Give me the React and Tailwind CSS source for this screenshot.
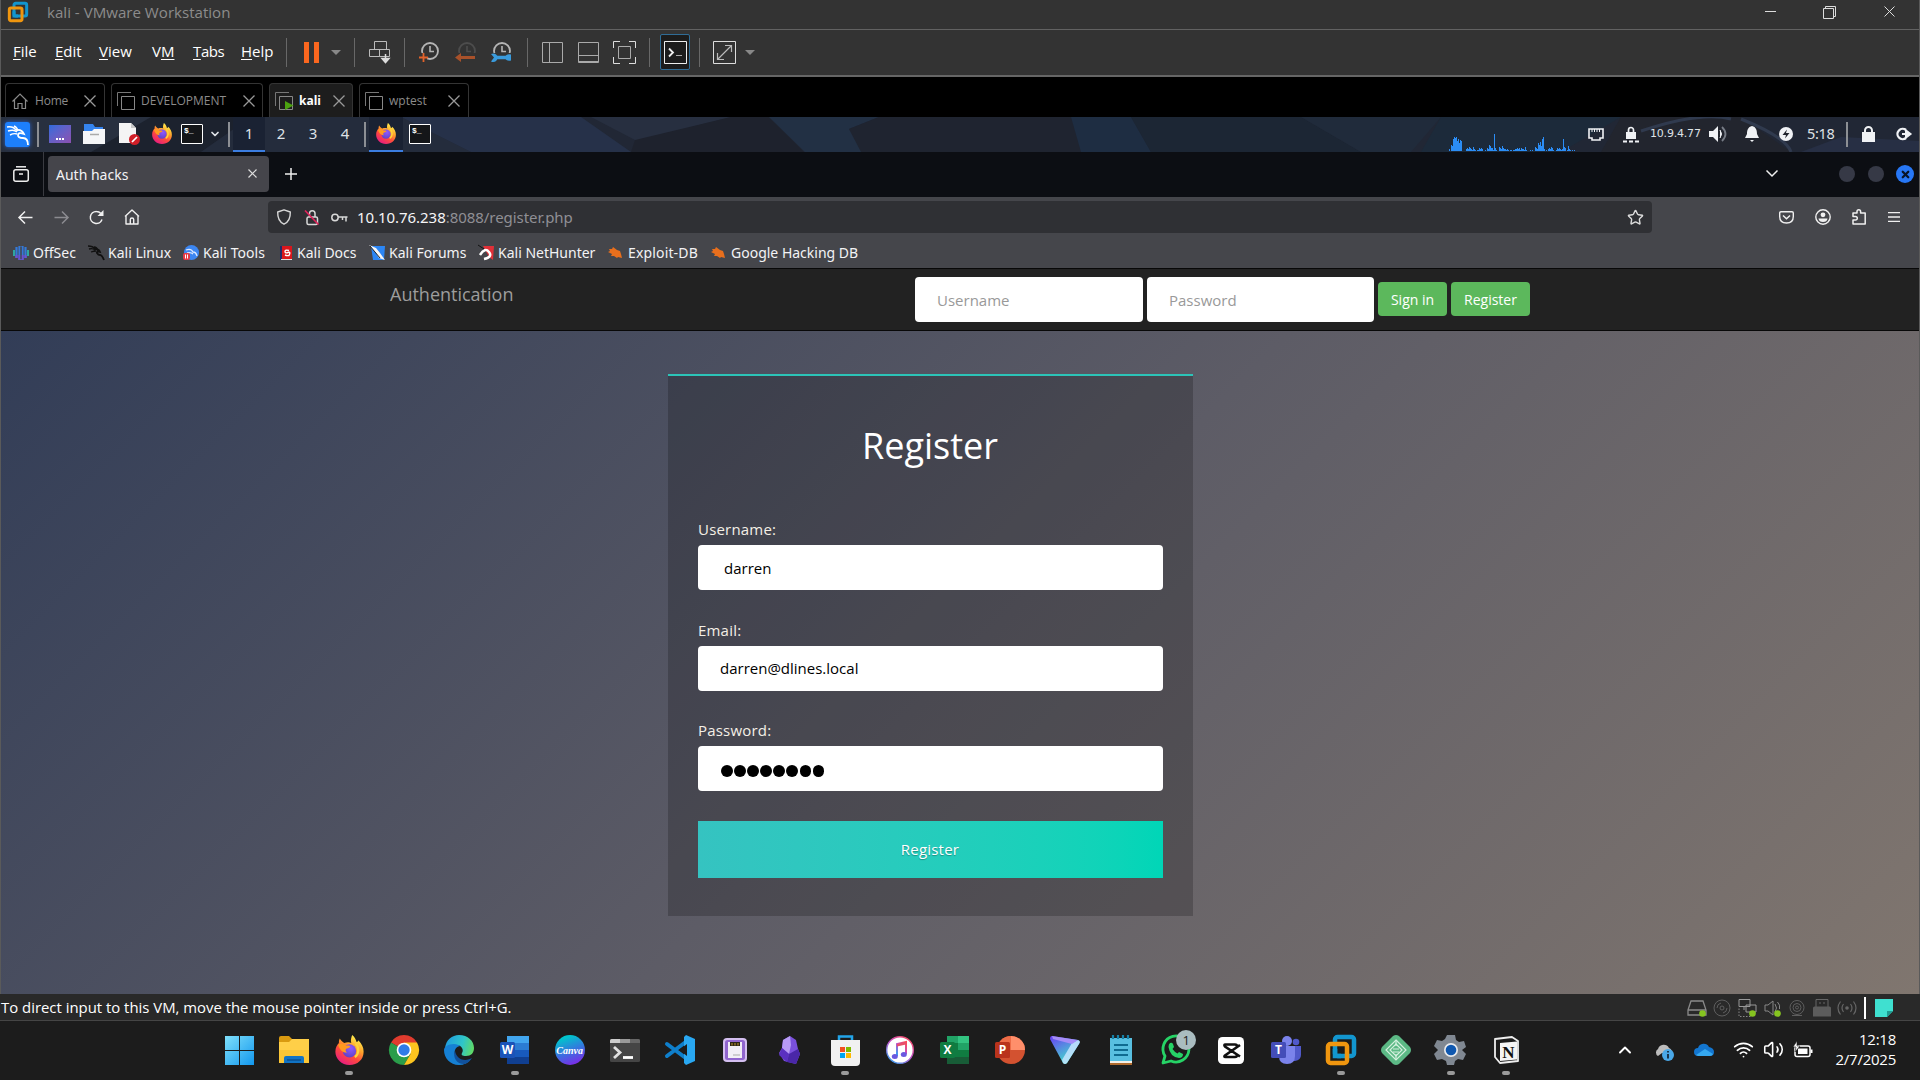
import React from "react";
import { Wifi, Volume2, ChevronUp, ChevronDown, X, Star } from "lucide-react";

const Svg = ({ w, h, box, className = "", children }) => (
  <svg
    width={w}
    height={h}
    viewBox={box || `0 0 ${w} ${h}`}
    fill="none"
    className={`shrink-0 block overflow-visible ${className}`}
  >
    {children}
  </svg>
);

/* ---------- shared logos ---------- */

const VMwareLogo = ({ w = 20, h = 20 }) => (
  <Svg w={w} h={h} box="0 0 30 30">
    <rect x="9" y="2" width="19" height="19" rx="2.5" stroke="#1296cf" strokeWidth="4.5" />
    <rect x="2" y="9" width="19" height="19" rx="2.5" stroke="#f0960f" strokeWidth="4.5" />
    <path d="M9 14V21H15" stroke="#1296cf" strokeWidth="4.5" />
  </Svg>
);

const FirefoxLogo = ({ w = 20, h = 21 }) => (
  <Svg w={w} h={h} box="0 0 32 34">
    <defs>
      <linearGradient id="ffOuter" x1="26" y1="3" x2="8" y2="32" gradientUnits="userSpaceOnUse">
        <stop offset="0" stopColor="#fff44f" />
        <stop offset=".35" stopColor="#ffa22b" />
        <stop offset=".65" stopColor="#ff4a3d" />
        <stop offset="1" stopColor="#e81f7c" />
      </linearGradient>
      <radialGradient id="ffGlobe" cx=".6" cy=".3" r=".8">
        <stop offset="0" stopColor="#9059ff" />
        <stop offset="1" stopColor="#5a3fc0" />
      </radialGradient>
    </defs>
    <path
      d="M19 0c3 2 4 5 5 8 1 0 2-1 2-2 4 4 6 8 6 13 0 9-7 15-16 15S0 27 0 19c0-5 2-8 4-10 0-2 0-3 1-5 1 2 3 4 5 5 3-1 6-1 8 0-1-3 0-6 1-9Z"
      fill="url(#ffOuter)"
    />
    <circle cx="16" cy="18" r="7.5" fill="url(#ffGlobe)" />
    <path d="M3 11c3-2 7-1 9 1 2 0 4 0 5 1-1 2-4 2-5 3-1 2 0 3 1 4-5 0-8-3-10-9Z" fill="#ff9a1f" />
    <path d="M23 10c4 4 4 12-1 15" stroke="#ffd43a" strokeWidth="2.5" />
  </Svg>
);

const TerminalBox = () => (
  <div className="w-[22px] h-[20px] border border-white bg-[#141619] text-white text-[8px] leading-[11px] font-bold font-['Liberation_Mono'] pl-[2px] rounded-[1px]">
    $_
  </div>
);

/* ---------- VMware window ---------- */

const TitleBar = () => (
  <div className="h-[30px] bg-[#333] border-b border-[#626262] flex items-start pl-[7px]">
    <div className="pt-[2px]">
      <VMwareLogo />
    </div>
    <span className="ml-[19px] w-[1700px] text-[15.1px] leading-[25px] text-[#8c8c8c] whitespace-nowrap">
      kali - VMware Workstation
    </span>
    <Svg w={12} h={12} className="ml-[18px] mt-[6px]">
      <path d="M0 5.5H11" stroke="#ddd" />
    </Svg>
    <Svg w={14} h={14} className="ml-[46px] mt-[6px]">
      <path d="M.5 2.5h10v10H.5zM2.5 2V.5h10v10H11" stroke="#ddd" />
    </Svg>
    <Svg w={12} h={12} className="ml-[47px] mt-[6px]">
      <path d="M.5.5l10 10M10.5.5l-10 10" stroke="#ddd" />
    </Svg>
  </div>
);

const Sep = ({ className = "" }) => (
  <div className={`w-px h-[29px] bg-[#686868] shrink-0 ${className}`} />
);

const ClockIcon = ({ color = "#b5b5b5", children }) => (
  <Svg w={22} h={22}>
    <circle cx="12" cy="10" r="8" stroke={color} strokeWidth="1.8" />
    <path d="M12 5v5.5h4" stroke={color} strokeWidth="1.6" />
    {children}
  </Svg>
);

const Toolbar = () => (
  <div className="h-[47px] bg-[#333] border-b-2 border-[#666] flex items-center pl-[12px] pb-px">
    <div className="flex text-[15px] text-white leading-none underline-offset-2 pb-px">
      <span className="w-[42px]"><u>F</u>ile</span>
      <span className="w-[44px]"><u>E</u>dit</span>
      <span className="w-[53px]"><u>V</u>iew</span>
      <span className="w-[41px]">V<u>M</u></span>
      <span className="w-[48px] tracking-[-0.4px]"><u>T</u>abs</span>
      <span className="w-[44px]"><u>H</u>elp</span>
    </div>
    <Sep className="ml-px" />
    <div className="ml-[17px] flex gap-[5px]">
      <div className="w-[5px] h-[21px] bg-[#fb671f]" />
      <div className="w-[5px] h-[21px] bg-[#fb671f]" />
    </div>
    <Svg w={10} h={5} className="ml-[12px]">
      <path d="M0 0h10L5 5z" fill="#888" />
    </Svg>
    <Sep className="ml-[13px]" />
    <Svg w={22} h={23} className="ml-[14px]">
      <path d="M5.500 .5h12v8h-12zM.5 8.500h10v7H.5zM10.500 8.500h10v7h-10z" stroke="#bbb" />
      <path d="M16.500 13v7M13 17.500l3.500 4 3.500-4z" stroke="#ddd" strokeWidth="1.500" fill="#ddd" />
    </Svg>
    <Sep className="ml-[13px]" />
    <div className="ml-[13px] w-[24px]">
      <ClockIcon>
        <path d="M0 12h9v10H0z" fill="#333" />
        <path d="M1 16.500h9M5.500 12v9" stroke="#e2622a" strokeWidth="1.800" />
      </ClockIcon>
    </div>
    <div className="ml-[13px] w-[24px]">
      <ClockIcon color="#4d4d4d">
        <path d="M0 12h22v10H0z" fill="#333" />
        <path d="M5 16.500h15" stroke="#a8512a" strokeWidth="3" />
        <path d="M6 12l-6 4.500L6 21z" fill="#a8512a" />
      </ClockIcon>
    </div>
    <div className="ml-[11px] w-[24px]">
      <ClockIcon>
        <path d="M0 12h22v10H0z" fill="#333" />
        <path d="M6 16.500h10" stroke="#3a9bdc" strokeWidth="3.500" />
        <path d="M1 13q5-2 7 3.500-2 6-7 4l3-4zM21 13.500q-5-1-6 3 1 4 6 3z" fill="#3a9bdc" />
      </ClockIcon>
    </div>
    <Sep className="ml-[13px]" />
    <Svg w={21} h={21} className="ml-[14px]">
      <path d="M.5.5h20v20H.5zM7.500.5v20" stroke="#aaa" />
    </Svg>
    <Svg w={21} h={21} className="ml-[15px]">
      <path d="M.5.5h20v20H.5zM.5 13.500h20M.5 19.500h20" stroke="#aaa" />
    </Svg>
    <Svg w={23} h={23} className="ml-[14px]">
      <path d="M.5 7V.5H7M16 .5h6.500V7M22.500 16v6.500H16M7 22.500H.5V16" stroke="#ddd" />
      <path d="M5.500 5.500h12v12h-12z" stroke="#aaa" />
    </Svg>
    <Sep className="ml-[13px]" />
    <div className="ml-[10px] w-[30px] h-[36px] border border-[#2f6c96] rounded-[2px] bg-[#1c1c1c] flex items-center justify-center">
      <Svg w={23} h={23}>
        <path d="M.5.5h22v22H.5z" stroke="#eee" />
        <path d="M5 7.500l4 4-4 4" stroke="#eee" strokeWidth="1.800" />
        <path d="M12 14.500h6" stroke="#aaa" />
      </Svg>
    </div>
    <Sep className="ml-[9px]" />
    <Svg w={23} h={23} className="ml-[13px]">
      <path d="M.5.5h22v22H.5z" stroke="#ddd" />
      <path d="M4.500 18.500l14-14M12 4.500h6.500V11M4.500 12v6.500H11" stroke="#bbb" strokeWidth="1.200" />
    </Svg>
    <Svg w={10} h={5} className="ml-[9px]">
      <path d="M0 0h10L5 5z" fill="#888" />
    </Svg>
  </div>
);

const VmIcon = ({ running }) => (
  <Svg w={18} h={18}>
    <path d="M.5 14V.5H14" stroke="#777" />
    <path d="M4.500 4.500h13v13h-13z" stroke="#888" />
    {running && <path d="M10 9l8.500 4.500L10 18z" fill="#4ba20f" />}
  </Svg>
);

const TabClose = () => (
  <Svg w={12} h={12}>
    <path d="M.5.5l11 11M11.500.5l-11 11" stroke="#999" strokeWidth="1.300" />
  </Svg>
);

const VmTabs = () => (
  <div className="h-[40px] bg-black flex items-end gap-[6px] pl-[4px] text-[12px] text-[#8b8b8b] leading-none">
    <div className="w-[100px] h-[34px] border border-b-0 border-[#343434] rounded-t-[4px] flex items-center pl-[6px]">
      <Svg w={16} h={16}>
        <path d="M.5 8.500L8 1l7.500 7.500M2.500 7v8.500h3.500v-5h4v5h3.500V7" stroke="#8b8b8b" strokeWidth="1.200" />
      </Svg>
      <span className="ml-[7px] w-[49px] tracking-[-0.2px]">Home</span>
      <TabClose />
    </div>
    <div className="w-[152px] h-[34px] border border-b-0 border-[#343434] rounded-t-[4px] flex items-center pl-[5px]">
      <VmIcon />
      <span className="ml-[6px] w-[102px]">DEVELOPMENT</span>
      <TabClose />
    </div>
    <div className="w-[84px] h-[34px] border border-b-0 border-[#343434] bg-[#1d1d1d] rounded-t-[4px] flex items-center pl-[5px]">
      <VmIcon running />
      <span className="ml-[6px] w-[34px] text-white font-bold">kali</span>
      <TabClose />
    </div>
    <div className="w-[110px] h-[34px] border border-b-0 border-[#343434] rounded-t-[4px] flex items-center pl-[5px]">
      <VmIcon />
      <span className="ml-[6px] w-[59px]">wptest</span>
      <TabClose />
    </div>
  </div>
);

/* ---------- Kali panel ---------- */

const CPU = [
  2, 0, 6, 5, 12, 14, 13, 14, 10, 12, 8, 11, 10, 0, 0, 0, 0, 2, 3, 2, 4, 3, 2, 1, 4, 2, 1, 0, 1, 1, 3, 2, 3, 2,
  0, 0, 1, 0, 3, 2, 6, 5, 3, 3, 1, 17, 3, 1, 0, 0, 4, 3, 2, 5, 3, 2, 2, 1, 2, 1, 0, 1, 1, 0, 1, 1, 2, 2, 3, 2, 3,
  1, 3, 2, 2, 1, 4, 1, 0, 0, 0, 1, 0, 1, 0, 0, 4, 3, 2, 8, 6, 9, 5, 12, 14, 2, 0, 1, 0, 2, 3, 2, 4, 3, 1, 0, 0,
  1, 3, 2, 3, 2, 1, 2, 12, 4, 3, 0, 1, 5, 2, 1, 0, 1, 0, 1, 0,
];

const PanelSep = ({ className = "" }) => (
  <div className={`w-[2px] h-[25px] bg-[#8c8f94] shrink-0 ${className}`} />
);

const KaliPanel = () => (
  <div className="relative h-[35px] bg-[#212735] overflow-hidden">
    <svg className="absolute inset-0" width="1920" height="35" viewBox="0 0 1920 35">
      <path d="M0 0h180l-60 35H0z" fill="#28303f" />
      <path d="M150 0h100l-50 35h-110z" fill="#1c222e" />
      <path d="M250 0h150l70 35H200z" fill="#242c3c" />
      <path d="M400 0h180l50 35H470z" fill="#263149" />
      <path d="M590 0h140L636 24z" fill="#272f40" />
      <path d="M730 0h38l35 35H630l4-12z" fill="#1e222d" />
      <path d="M768 0h110l-30 12 16 23h-60z" fill="#223044" />
      <path d="M878 0h192l20 35H860l-12-23z" fill="#1f2430" />
      <path d="M1070 0h60l20 35h-70z" fill="#1e2d42" />
      <path d="M1130 0h170l60 35h-210z" fill="#1c2634" />
      <path d="M1300 0h140l-30 35h-50z" fill="#202b3b" />
      <path d="M1440 0h180l-60 35h-140z" fill="#1c2a3a" />
      <path d="M1620 0h120l50 35h-190z" fill="#22252e" />
      <path d="M1640 14q60-20 90-12M1740 2q45 18 50 33" stroke="#303a4e" strokeWidth="3" fill="none" />
      <path d="M1800 35l40-15 80 4v11z" fill="#272f44" />
    </svg>
    <div className="relative h-full flex items-center pl-[5px] text-[#dfe2e6]">
      <div className="mb-px -ml-px w-[25px] h-[25px] rounded-[3px] bg-[#1d7ffb] shadow-[0_0_4px_#2b62c8]">
        <Svg w={25} h={25}>
          <path d="M2 5q6-1 9 3M3 9q6-2 9 1M5 13q4-2 7-1M9 4q3 1 4 5" stroke="#fff" strokeWidth="1.400" />
          <path d="M11 8q6-1 8 4-6-2-6 1t5 3 5 7" stroke="#fff" strokeWidth="1.800" />
        </Svg>
      </div>
      <PanelSep className="ml-[7px]" />
      <div className="mb-[2px] ml-[10px] w-[22px] h-[18px] bg-linear-to-br from-[#2a6bdc] to-[#8a4fb0] flex items-end justify-center gap-[1px] pb-[3px]">
        <i className="size-[2px] bg-white" />
        <i className="size-[2px] bg-white" />
        <i className="size-[2px] bg-white" />
      </div>
      <Svg w={22} h={20} className="mb-[2px] ml-[12px]">
        <path d="M1 0h9l2 3h8v6H1z" fill="#3584ee" />
        <path d="M0 7h9l2-2h11v15H0z" fill="#f5f6f8" />
        <path d="M7 10.500h9" stroke="#aaa" strokeWidth="1.500" />
      </Svg>
      <Svg w={22} h={22} className="mb-[2px] ml-[14px]">
        <path d="M0 0h12l5 5v15H0z" fill="#f4f4f4" />
        <path d="M12 0l5 5h-5z" fill="#c8c8c8" />
        <circle cx="15.500" cy="16.500" r="5.500" fill="#d01f28" />
        <path d="M13 19l5-5" stroke="#fff" strokeWidth="1.700" />
      </Svg>
      <div className="mb-[2px] ml-[11px]">
        <FirefoxLogo />
      </div>
      <div className="mb-[2px] ml-[9px]">
        <TerminalBox />
      </div>
      <ChevronDown size={12} strokeWidth={3.5} className="mb-px ml-[6px]" />
      <PanelSep className="ml-[7px]" />
      <div className="ml-[3px] flex self-stretch text-[15px] font-['Noto_Sans']">
        <span className="w-[32px] flex items-center justify-center bg-[#1a2233] border-b-2 border-[#3b7de0]">1</span>
        <span className="w-[32px] flex items-center justify-center pb-[2px]">2</span>
        <span className="w-[32px] flex items-center justify-center pb-[2px]">3</span>
        <span className="w-[32px] flex items-center justify-center pb-[2px]">4</span>
      </div>
      <PanelSep className="ml-[3px]" />
      <div className="ml-[3px] w-[34px] self-stretch flex items-center justify-center bg-[#1a2233] border-b-2 border-[#3b7de0]">
        <FirefoxLogo />
      </div>
      <div className="mb-[2px] ml-[6px]">
        <TerminalBox />
      </div>
      <div className="ml-auto w-[128px] h-full flex items-end pb-px">
        {CPU.map((v, i) => (
          <i key={i} className="w-px bg-[#2b8df5]" style={{ height: v }} />
        ))}
      </div>
      <Svg w={16} h={13} className="ml-[11px] mb-px">
        <path d="M1 1h14v9h-3v2H4v-2H1z" stroke="#f0f2f5" strokeWidth="1.600" />
        <path d="M4 1v3M6.500 1v3M9 1v3M11.500 1v3" stroke="#f0f2f5" />
      </Svg>
      <Svg w={16} h={17} className="ml-[19px] mb-px">
        <path d="M3 6h10v7H3z" fill="#f0f2f5" />
        <path d="M5.500 7V4a2.500 2.500 0 015 0v3" stroke="#f0f2f5" strokeWidth="1.700" />
        <path d="M0 15.500h4M6 15.500h4M12 15.500h4" stroke="#f0f2f5" strokeWidth="2" />
      </Svg>
      <span className="ml-[11px] w-[59px] text-[11px] leading-none font-['DejaVu_Sans'] -mt-[2px] tracking-[-0.2px]">
        10.9.4.77
      </span>
      <Svg w={18} h={16} className="mb-px">
        <path d="M0 5h4l5-5v16l-5-5H0z" fill="#f0f2f5" />
        <path d="M11 4q3 4 0 8" fill="#f0f2f5" stroke="#f0f2f5" />
        <path d="M13 1q7 7 0 14" stroke="#777c86" strokeWidth="1.800" />
      </Svg>
      <Svg w={14} h={16} className="ml-[18px] mb-px">
        <path d="M7 0c4 1 5 4 5 8l2 4H0l2-4c0-4 1-7 5-8zM5 14h4l-2 2z" fill="#f0f2f5" />
      </Svg>
      <Svg w={14} h={14} className="ml-[20px] mb-px">
        <circle cx="7" cy="7" r="7" fill="#f0f2f5" />
        <path d="M8 2.500L3.500 8H7l-1 3.500L10.500 6H7z" fill="#20242d" />
      </Svg>
      <span className="ml-[14px] w-[39px] leading-none font-['Noto_Sans'] text-[14.5px] tracking-[-0.3px] pb-[2px]">5:18</span>
      <PanelSep />
      <Svg w={13} h={16} className="ml-[14px] mb-px">
        <path d="M0 6h13v10H0z" fill="#f0f2f5" />
        <path d="M3 7V4.500a3.500 3.500 0 017 0V7" stroke="#f0f2f5" strokeWidth="2" />
      </Svg>
      <Svg w={15} h={14} className="ml-[21px] mr-[8px] mb-px">
        <path d="M10 3A5.200 5.200 0 1010 11" stroke="#f0f2f5" strokeWidth="2.300" />
        <path d="M6 7h5M10 3.500L14.500 7 10 10.500z" stroke="#f0f2f5" strokeWidth="2" fill="#f0f2f5" />
      </Svg>
    </div>
  </div>
);

/* ---------- Firefox ---------- */

const FirefoxTabs = () => (
  <div className="h-[45px] bg-[#0c0e13] flex items-center pl-[12px] pb-px font-['Noto_Sans']">
    <Svg w={16} h={16}>
      <path d="M3 .8h10" stroke="#eee" strokeWidth="1.500" />
      <rect x=".8" y="3.700" width="14.500" height="11.500" rx="2" stroke="#eee" strokeWidth="1.500" />
      <path d="M6 8h4" stroke="#eee" strokeWidth="1.500" />
    </Svg>
    <div className="ml-[14px] w-px h-full bg-[#3a3b41]" />
    <div className="ml-[4px] w-[221px] h-[36px] bg-[#45454b] rounded-[4px] flex items-center pl-[8px] text-[14px] text-[#f3f3f5]">
      <span className="w-[192px]">Auth hacks</span>
      <Svg w={9} h={9} className="mb-px">
        <path d="M.5.5l8 8M8.500.5l-8 8" stroke="#ddd" strokeWidth="1.200" />
      </Svg>
    </div>
    <Svg w={12} h={12} className="ml-[16px]">
      <path d="M6 0v12M0 6h12" stroke="#f0f0f0" strokeWidth="1.500" />
    </Svg>
    <Svg w={12} h={7} className="ml-auto mb-px">
      <path d="M.5.5L6 6l5.500-5.500" stroke="#f0f0f0" strokeWidth="1.500" />
    </Svg>
    <div className="ml-[61px] size-[16px] rounded-full bg-[#363946]" />
    <div className="ml-[13px] size-[16px] rounded-full bg-[#363946]" />
    <div className="ml-[12px] mr-[5px] size-[18px] rounded-full bg-[#2777f5] flex items-center justify-center">
      <X size={11} strokeWidth={5} className="text-[#081428]" />
    </div>
  </div>
);

const NavBar = () => (
  <div className="h-[40px] bg-[#45464b] flex items-center pl-[17px] font-['Noto_Sans']">
    <Svg w={15} h={13}>
      <path d="M14.500 6.500H1M7 .5l-6 6 6 6" stroke="#f0f0f0" strokeWidth="1.500" />
    </Svg>
    <Svg w={15} h={13} className="ml-[21px]">
      <path d="M.5 6.500H14M8 .5l6 6-6 6" stroke="#8b8b90" strokeWidth="1.500" />
    </Svg>
    <Svg w={15} h={15} className="ml-[20px]">
      <path d="M13 9.500A6 6 0 117.500 1.500c2 0 3.500 1 4.500 2" stroke="#f0f0f0" strokeWidth="1.500" />
      <path d="M14.500 0v6h-6z" fill="#f0f0f0" />
    </Svg>
    <Svg w={16} h={16} className="ml-[20px]">
      <path d="M1 7.500l7-6.500 7 6.500M2 7v8h12V7M6.300 15v-4.500q0-1.500 1.700-1.500t1.700 1.500V15" stroke="#f0f0f0" strokeWidth="1.400" strokeLinejoin="round" />
    </Svg>
    <div className="ml-[128px] w-[1384px] h-[32px] bg-[#2f3034] rounded-[4px] flex items-center pl-[9px]">
      <Svg w={14} h={16}>
        <path d="M7 .8L13.300 3c.2 6-1.500 10-6.300 12.200C2.200 13 .5 9 .7 3z" stroke="#d8d8d8" strokeWidth="1.400" strokeLinejoin="round" />
      </Svg>
      <Svg w={14} h={17} className="ml-[14px]">
        <rect x="2" y="8" width="10.500" height="7.500" rx="1.500" stroke="#d8d8d8" strokeWidth="1.500" />
        <path d="M4.500 8V4.500a2.700 2.700 0 015.500 0V8" stroke="#d8d8d8" strokeWidth="1.500" />
        <path d="M0 1.500l13.500 14" stroke="#e2235b" strokeWidth="1.700" />
      </Svg>
      <Svg w={17} h={9} className="ml-[12px]">
        <circle cx="4" cy="4.500" r="3.200" stroke="#d8d8d8" strokeWidth="1.500" />
        <path d="M7 4h9.500M15 4v4.500M11.500 4v3" stroke="#d8d8d8" strokeWidth="1.500" />
      </Svg>
      <span className="ml-[9px] w-[1271px] text-[15px] leading-none text-[#8f8f94] whitespace-nowrap tracking-[-0.05px]">
        <span className="text-[#f5f5f7]">10.10.76.238</span>:8088/register.php
      </span>
      <Star size={17} strokeWidth={2} className="text-[#dcdcdc] -ml-px" />
    </div>
    <Svg w={15} h={13} className="ml-[127px]">
      <path d="M.7 2q0-1.300 1.300-1.300h11q1.300 0 1.300 1.300v3.500q0 6.500-6.800 6.500T.7 5.500z" stroke="#f0f0f0" strokeWidth="1.400" />
      <path d="M4 4.500l3.500 3.300L11 4.500" stroke="#f0f0f0" strokeWidth="1.500" />
    </Svg>
    <Svg w={16} h={16} className="ml-[21px]">
      <circle cx="8" cy="8" r="7.200" stroke="#f0f0f0" strokeWidth="1.400" />
      <circle cx="8" cy="5.800" r="2.400" fill="#f0f0f0" />
      <path d="M3.500 9.500h9q-.5 3.500-4.500 3.500t-4.500-3.500z" fill="#f0f0f0" />
    </Svg>
    <Svg w={15} h={16} className="ml-[21px]">
      <path d="M1 15V11h2.500a1.800 1.800 0 000-3.600H1V4h4V2.500a1.800 1.800 0 013.600 0V4h4.600v11z" stroke="#f0f0f0" strokeWidth="1.500" strokeLinejoin="round" />
    </Svg>
    <Svg w={12} h={10} className="ml-[21px]">
      <path d="M0 .7h12M0 5h12M0 9.300h12" stroke="#f0f0f0" strokeWidth="1.300" />
    </Svg>
  </div>
);

const ExploitIcon = () => (
  <Svg w={14} h={12}>
    <path d="M1 2l3 0 1-2 4 3 3 1 1 3 1 4-4-1-1 1-3-2-3 0 1-2-4-2 2-1z" fill="#e86f1d" />
  </Svg>
);

const Bookmarks = () => (
  <div className="h-[31px] bg-[#45464b] flex items-center pl-[12px] pt-px text-[14px] leading-none text-[#f3f3f5] font-['Noto_Sans'] whitespace-nowrap">
    <Svg w={16} h={16}>
      <path d="M6.500 1v14M3.500 2v11M9.500 1v14M12.500 2v11" stroke="#3479d8" strokeWidth="2.200" />
      <path d="M1 5v6M15 5v6" stroke="#2fa6a0" strokeWidth="2" />
      <path d="M3.500 10v3M6.500 10v5M9.500 10v5M12.500 10v3" stroke="#6e4fd0" strokeWidth="2.200" />
      <path d="M8 2v12" stroke="#45464b" strokeWidth="1.200" />
    </Svg>
    <span className="ml-[4px] w-[55px]">OffSec</span>
    <Svg w={17} h={16}>
      <path d="M0 1q5 0 7 3M1 4q4-1 6 1M3 7q3-1 5-1M6 2q3 0 4 4" stroke="#111" strokeWidth="1.300" />
      <path d="M7 4q4 0 5 3-4-1-3 1t3 2 4 5" stroke="#111" strokeWidth="1.800" />
    </Svg>
    <span className="ml-[3px] w-[75px]">Kali Linux</span>
    <Svg w={16} h={16}>
      <circle cx="8.500" cy="7.500" r="7.500" fill="#3c86f2" />
      <path d="M3 5q5-2 7 2 3 0 4 4M4 8q4-1 6 1" stroke="#dbe8ff" strokeWidth="1.300" />
      <rect x="0" y="8" width="7" height="7" rx="2" fill="#e63946" />
      <path d="M2.500 9.500v4M4.500 9.500v4" stroke="#fff" />
    </Svg>
    <span className="ml-[4px] w-[77px] tracking-[0.05px]">Kali Tools</span>
    <Svg w={12} h={16}>
      <path d="M0 1h12v14H0z" fill="#d9161c" />
      <path d="M0 1h2v14H0z" fill="#222a66" />
      <path d="M1 14.500h11" stroke="#ddd" />
      <path d="M9 5.500q-4-1-4 1t3 1 1 3q-2 .5-4-.5" stroke="#fff" strokeWidth="1.400" />
    </Svg>
    <span className="ml-[5px] w-[72px]">Kali Docs</span>
    <Svg w={17} h={16}>
      <path d="M2 1h14l-1 14H4z" fill="#2b86f5" />
      <path d="M0 0l7 3 4 5 5 7-6-2-3-5z" fill="#f6f6f6" />
      <path d="M1 1l5 6 5 6" stroke="#222" />
    </Svg>
    <span className="ml-[3px] w-[89px]">Kali Forums</span>
    <Svg w={17} h={16}>
      <path d="M5 1h11l-1 14-4-3z" fill="#e03038" />
      <path d="M2 10q5-8 9-3t-5 7" stroke="#fff" strokeWidth="2.500" />
      <path d="M0 0l6 4" stroke="#111" />
    </Svg>
    <span className="ml-[3px] w-[110px]">Kali NetHunter</span>
    <ExploitIcon />
    <span className="ml-[6px] w-[83px] tracking-[0.15px]">Exploit-DB</span>
    <ExploitIcon />
    <span className="ml-[6px]">Google Hacking DB</span>
  </div>
);

/* ---------- Web page ---------- */

const Field = ({ label, children }) => (
  <div className="h-[100.5px]">
    <label className="block h-[26px] text-[15px] leading-[20px] tracking-[0.2px] text-[#f4efe6]">{label}</label>
    {children}
  </div>
);

const WebPage = () => (
  <div className="h-[726px] flex flex-col font-['Open_Sans']">
    <div className="h-[63px] bg-[#222] border-y border-[#080808] flex items-center pl-[389px] shrink-0">
      <span className="w-[525px] text-[18px] leading-none text-[#9d9d9d] pb-[11px]">Authentication</span>
      <input
        className="w-[228px] h-[45px] bg-white rounded-[4px] pl-[22px] text-[15px] placeholder:text-[#999]"
        placeholder="Username"
      />
      <input
        className="ml-[4px] w-[227px] h-[45px] bg-white rounded-[4px] pl-[22px] text-[15px] placeholder:text-[#999]"
        placeholder="Password"
      />
      <button className="ml-[4px] mb-px w-[69px] h-[34px] bg-[#5cb85c] rounded-[4px] text-[14px] text-white">Sign in</button>
      <button className="ml-[4px] mb-px w-[79px] h-[34px] bg-[#5cb85c] rounded-[4px] text-[14px] text-white">Register</button>
    </div>
    <div className="flex-1 bg-[linear-gradient(135deg,#323d57_0%,#5d5c66_50%,#80766f_100%)] pt-[43px] pl-[667px]">
      <div className="w-[525px] h-[542px] bg-black/20 border-t-2 border-[#2cc4b8] px-[30px]">
        <h1 className="h-[143px] pt-[46px] pr-px text-center text-[36px] leading-[48px] text-white">Register</h1>
        <Field label="Username:">
          <input
            className="block w-[465px] h-[45px] bg-white rounded-[4px] pl-[26px] text-[15px] text-black"
            defaultValue="darren"
          />
        </Field>
        <Field label="Email:">
          <input
            className="block w-[465px] h-[45px] bg-white rounded-[4px] pl-[22px] text-[15px] text-black"
            defaultValue="darren@dlines.local"
          />
        </Field>
        <Field label="Password:">
          <div className="w-[465px] h-[45px] bg-white rounded-[4px] flex items-center gap-[1.5px] pl-[23px] pt-[4px]">
            {[...Array(8)].map((_, i) => (
              <i key={i} className="w-[11.6px] h-[12px] rounded-full bg-black" />
            ))}
          </div>
        </Field>
        <button className="block mt-[0.5px] w-[465px] h-[57px] pr-px bg-linear-to-r from-[#35c3c1] to-[#00d6b7] text-[15px] tracking-[0.2px] text-white [text-shadow:0_1px_1px_rgba(0,0,0,.3)]">
          Register
        </button>
      </div>
    </div>
  </div>
);

/* ---------- VMware status bar ---------- */

const Dot = ({ x, y }) => <circle cx={x} cy={y} r="3.300" fill="#86c420" />;

const StatusBar = () => (
  <div className="h-[27px] bg-[#292929] border-b border-[#454545] flex items-center pl-px pt-px pr-[27px]">
    <span className="text-[14.9px] leading-none text-white whitespace-nowrap">
      To direct input to this VM, move the mouse pointer inside or press Ctrl+G.
    </span>
    <Svg w={20} h={18} className="ml-auto">
      <path d="M1 11L4 2h12l3 9v5H1zM1 11h18" stroke="#8a8a8a" strokeWidth="1.300" />
      <Dot x={15.5} y={14.5} />
    </Svg>
    <Svg w={18} h={18} className="ml-[6px]">
      <circle cx="9" cy="9" r="8" stroke="#5e5e5e" />
      <circle cx="9" cy="9" r="2" stroke="#5e5e5e" />
      <path d="M4 9q0-4 4-5M14 9q0 4-4 5" stroke="#5e5e5e" />
    </Svg>
    <Svg w={19} h={18} className="ml-[7px]">
      <path d="M1 .5h11v7H1zM8 6h10v7H8zM6 8v3" stroke="#999" />
      <path d="M1 9.500v8h12" stroke="#888" strokeDasharray="1.500 1.500" />
      <Dot x={14.5} y={14.5} />
    </Svg>
    <Svg w={18} h={18} className="ml-[7px]">
      <path d="M1 6h3l5-4v14l-5-4H1zM11 5q3 4 0 8M13.500 3q3 3 2 7" stroke="#888" />
      <Dot x={13.5} y={14.5} />
    </Svg>
    <Svg w={16} h={18} className="ml-[7px]">
      <circle cx="8" cy="8.500" r="7" stroke="#5e5e5e" />
      <circle cx="8" cy="8.500" r="4" stroke="#5e5e5e" />
      <circle cx="8" cy="8.500" r="1.500" stroke="#5e5e5e" />
      <path d="M3 16.500h10" stroke="#5e5e5e" />
    </Svg>
    <Svg w={18} h={18} className="ml-[8px]">
      <path d="M3 8V.5h12V8" stroke="#666" />
      <path d="M6 4h2M10 4h2" stroke="#666" />
      <path d="M0 9q0-1.500 1.500-1.500h15Q18 7.500 18 9v8.500H0z" fill="#5c5c5c" />
    </Svg>
    <Svg w={20} h={16} className="ml-[6px]">
      <circle cx="10" cy="8" r="1.800" fill="#666" />
      <path d="M6.500 4q-3 4 0 8M13.500 4q3 4 0 8M3.500 1.500q-5 6.500 0 13M16.500 1.500q5 6.500 0 13" stroke="#666" strokeWidth="1.200" />
    </Svg>
    <div className="ml-[7px] w-[2px] h-[22px] bg-white" />
    <Svg w={18} h={18} className="ml-[9px]">
      <path d="M0 0h18v12l-6 6H0z" fill="#3fe0d0" />
      <path d="M18 12h-6v6z" fill="#1f9c92" />
    </Svg>
  </div>
);

/* ---------- Windows taskbar ---------- */

const OfficeIcon = ({ letter, bg, children }) => (
  <Svg w={30} h={30}>
    {children}
    <rect x="0" y="7" width="15" height="16" rx="1.500" fill={bg} />
    <text x="7.500" y="19.200" fill="#fff" fontSize="12" fontWeight="700" textAnchor="middle" fontFamily="Open Sans">
      {letter}
    </text>
  </Svg>
);

const APPS = [
  {
    name: "start",
    icon: (
      <Svg w={29} h={29}>
        <defs>
          <linearGradient id="win" x1="0" y1="0" x2="1" y2="1">
            <stop offset="0" stopColor="#7fe0fb" />
            <stop offset="1" stopColor="#1297ee" />
          </linearGradient>
        </defs>
        <path d="M0 0h14v14H0zM15 0h14v14H15zM0 15h14v14H0zM15 15h14v14H15z" fill="url(#win)" />
      </Svg>
    ),
  },
  {
    name: "explorer",
    icon: (
      <Svg w={30} h={28}>
        <path d="M0 2q0-2 2-2h8l3 3v6H0z" fill="#d99a10" />
        <path d="M0 6h10l3-3h17v24H0z" fill="#ffcf48" />
        <path d="M0 14h30v13H0z" fill="#f9bf2c" fillOpacity=".6" />
        <path d="M5 27v-5q0-2 2-2h16q2 0 2 2v5z" fill="#1173c4" />
        <path d="M8 24h14" stroke="#0a4f90" strokeWidth="1.500" />
      </Svg>
    ),
  },
  { name: "firefox", active: true, icon: <FirefoxLogo w={29} h={30} /> },
  {
    name: "chrome",
    icon: (
      <Svg w={30} h={30}>
        <path d="M15 15L2 7.500A15 15 0 0128 7.500z" fill="#e03b2e" />
        <path d="M15 15L2 7.500A15 15 0 0015 30l6.500-11z" fill="#2a9d4a" />
        <path d="M21.500 19L15 30A15 15 0 0028 7.500H15z" fill="#fcc41f" />
        <circle cx="15" cy="15" r="7.300" fill="#fff" />
        <circle cx="15" cy="15" r="5.700" fill="#2f7be8" />
      </Svg>
    ),
  },
  {
    name: "edge",
    icon: (
      <Svg w={30} h={30}>
        <defs>
          <linearGradient id="edgeTop" x1="0" y1=".3" x2="1" y2=".5">
            <stop offset="0" stopColor="#1f9be0" />
            <stop offset=".6" stopColor="#2fc5c9" />
            <stop offset="1" stopColor="#5fd968" />
          </linearGradient>
        </defs>
        <path d="M1 13C2 5 8 0 15 0c9 0 15 6 15 13 0 5-3 8-8 8-4 0-5-1-4-3 2-3 0-8-6-8-5 0-9 2-11 3z" fill="url(#edgeTop)" />
        <path d="M0 15c0-3 4-6 10-6 3 0 5 1 6 2-5 1-6 5-5 9 2 5 8 7 16 4-3 4-7 6-12 6C6 30 0 23 0 15z" fill="#1680d4" />
        <path d="M11 16c-3 7 3 14 10 13 3-1 5-3 7-6-7 4-15 2-17-7z" fill="#11519c" />
      </Svg>
    ),
  },
  {
    name: "word",
    active: true,
    icon: (
      <OfficeIcon letter="W" bg="#1a53b8">
        <path d="M7 1h22v7H7z" fill="#41a5ee" />
        <path d="M7 8h22v7H7z" fill="#2b7cd3" />
        <path d="M7 15h22v7H7z" fill="#185abd" />
        <path d="M7 22h22v7H7z" fill="#103f91" />
      </OfficeIcon>
    ),
  },
  {
    name: "canva",
    icon: (
      <div className="size-[30px] rounded-full bg-[linear-gradient(160deg,#00c4cc_15%,#3a6fe0_55%,#7d2ae8_90%)] flex items-center justify-center text-white text-[10px] italic font-bold font-['Liberation_Serif']">
        Canva
      </div>
    ),
  },
  {
    name: "terminal",
    icon: (
      <Svg w={30} h={23}>
        <rect width="30" height="23" rx="1.500" fill="#454545" />
        <path d="M0 1.500Q0 0 1.500 0H20v4H0z" fill="#ccc" />
        <path d="M20 0h8.500Q30 0 30 1.500V4H20z" fill="#666" />
        <path d="M10 0h10v4H10z" fill="#999" />
        <path d="M4 8l6 5.500L4 19" stroke="#e0e0e0" strokeWidth="2.800" />
        <path d="M13 18.500h10" stroke="#fff" strokeWidth="2.800" />
      </Svg>
    ),
  },
  {
    name: "vscode",
    icon: (
      <Svg w={30} h={30}>
        <path d="M22 6L2 21M2 9l20 15" stroke="#0f7fcb" strokeWidth="4" strokeLinecap="round" />
        <path d="M21 0l9 4v22l-9 4-2-2V2z" fill="#29a8f2" />
        <path d="M22 9v12l-8-6z" fill="#1c1c1c" />
      </Svg>
    ),
  },
  {
    name: "drive",
    icon: (
      <Svg w={24} h={24}>
        <rect width="24" height="24" rx="4" fill="#d4bff0" />
        <rect x="2" y="2" width="20" height="20" rx="2.500" fill="#9165cf" />
        <path d="M5 4h14v16H5z" fill="#f2eef6" />
        <path d="M7 4h10v4H7z" fill="#2b2419" />
        <path d="M9 5v2.500M12 5v2.500M15 5v2.500" stroke="#c79a2c" />
        <path d="M10 17h7" stroke="#aaa" />
      </Svg>
    ),
  },
  {
    name: "obsidian",
    icon: (
      <Svg w={21} h={28}>
        <path d="M11 0l6 4 2 9 2 5-4 10-12-3-5-8 3-5 1-8z" fill="#7a50dc" />
        <path d="M11 0L4 4l-1 8 7 6 2-9z" fill="#b79bf5" />
        <path d="M3 12l7 6-2 8-8-7z" fill="#5a30c0" />
        <path d="M19 13l2 5-4 10-9-2 2-8z" fill="#4a27a8" />
      </Svg>
    ),
  },
  {
    name: "store",
    active: true,
    icon: (
      <Svg w={29} h={31}>
        <path d="M8 8V1.500h13V8" stroke="#22a4e8" strokeWidth="2.500" />
        <path d="M0 5h29v22q0 4-4 4H4q-4 0-4-4z" fill="#f1f1f1" />
        <path d="M9 12h5v5H9z" fill="#f25022" />
        <path d="M15 12h5v5h-5z" fill="#7fba00" />
        <path d="M9 18h5v5H9z" fill="#00a4ef" />
        <path d="M15 18h5v5h-5z" fill="#ffb900" />
      </Svg>
    ),
  },
  {
    name: "itunes",
    icon: (
      <Svg w={28} h={28}>
        <defs>
          <linearGradient id="tunes" x1=".9" y1="0" x2=".2" y2="1">
            <stop offset="0" stopColor="#fb4a5a" />
            <stop offset=".5" stopColor="#c050c8" />
            <stop offset="1" stopColor="#3a9ff0" />
          </linearGradient>
        </defs>
        <circle cx="14" cy="14" r="13.300" fill="#fff" stroke="url(#tunes)" strokeWidth="1.400" />
        <path d="M11 20V8l9-2v12" stroke="url(#tunes)" strokeWidth="2" />
        <path d="M11 8l9-2v2.500l-9 2z" fill="#e8506a" />
        <ellipse cx="8.800" cy="20.500" rx="3" ry="2.500" fill="#6a58e0" />
        <ellipse cx="17.800" cy="18.500" rx="3" ry="2.500" fill="#6a58e0" />
      </Svg>
    ),
  },
  {
    name: "excel",
    icon: (
      <OfficeIcon letter="X" bg="#107c41">
        <path d="M7 1h22v7H7z" fill="#21a366" />
        <path d="M18 1h11v7H18z" fill="#33c481" />
        <path d="M7 8h22v7H7z" fill="#107c41" />
        <path d="M18 8h11v7H18z" fill="#21a366" />
        <path d="M7 15h22v7H7z" fill="#107c41" />
        <path d="M7 22h22v7H7z" fill="#185c37" />
      </OfficeIcon>
    ),
  },
  {
    name: "powerpoint",
    icon: (
      <OfficeIcon letter="P" bg="#b9331c">
        <circle cx="16" cy="15" r="14" fill="#d35230" />
        <path d="M16 1a14 14 0 0114 14H16z" fill="#ff8f6b" />
        <path d="M16 1A14 14 0 002 15h14z" fill="#ed6c47" />
      </OfficeIcon>
    ),
  },
  {
    name: "proton",
    icon: (
      <Svg w={30} h={28}>
        <defs>
          <linearGradient id="proton" x1="0" y1="0" x2=".6" y2="1">
            <stop offset="0" stopColor="#6a3df5" />
            <stop offset="1" stopColor="#3fe8c8" />
          </linearGradient>
        </defs>
        <path d="M2 0l26 4q3 1 1 4L17 27q-2 2-4 0L0 3q0-3 2-3z" fill="url(#proton)" />
        <path d="M22 7l6-3q3 1 1 4L17 27q-2 2-4 0l-1-3z" fill="#c7e4ff" fillOpacity=".85" />
        <path d="M2 0l26 4-6 4L3 3z" fill="#a58cf8" />
      </Svg>
    ),
  },
  {
    name: "notepad",
    icon: (
      <Svg w={22} h={30}>
        <path d="M0 3h22v24H0z" fill="#58bfe0" />
        <path d="M0 26h22v2H0z" fill="#f3efe6" />
        <path d="M0 28h22v2H0z" fill="#b06a2c" />
        <path d="M3 0v4M8 0v4M13 0v4M18 0v4" stroke="#1681a8" strokeWidth="2.200" />
        <path d="M4 10h14M4 15h14M4 20h14" stroke="#0f6b90" strokeWidth="1.800" />
      </Svg>
    ),
  },
  {
    name: "whatsapp",
    badge: "1",
    icon: (
      <Svg w={30} h={30}>
        <path d="M2 28l2-7A13 13 0 1110 26z" stroke="#26d366" strokeWidth="2.800" strokeLinejoin="round" />
        <path d="M9 8q2-1 3 1l1 3-1.500 2q2 3 5 4.500L18 17l4 2q0 4-4 4Q9 22 7.500 12 7.500 9 9 8z" fill="#26d366" />
      </Svg>
    ),
  },
  {
    name: "capcut",
    icon: (
      <Svg w={26} h={27}>
        <rect width="26" height="27" rx="4.500" fill="#fff" />
        <path d="M22 8L7 18.500q-1.500 1.500.5 1.500H17q2 0 2-2M22 19.500L7 9.500Q5.500 7.500 7.500 7.500H17q2 0 2 2" stroke="#111" strokeWidth="2.600" />
      </Svg>
    ),
  },
  {
    name: "teams",
    icon: (
      <OfficeIcon letter="T" bg="#444db8">
        <circle cx="16" cy="6" r="5" fill="#7b83eb" />
        <circle cx="25" cy="7" r="3.300" fill="#5059c9" />
        <path d="M19 11h11v9q0 5-6 6h-5z" fill="#5059c9" />
        <path d="M8 11h16v10q0 8-8 8t-8-8z" fill="#7b83eb" />
      </OfficeIcon>
    ),
  },
  { name: "vmware", active: true, icon: <VMwareLogo w={30} h={30} /> },
  {
    name: "diamond",
    icon: (
      <Svg w={30} h={30}>
        <path d="M12 1q3-2 6 0l11 11q2 3 0 6L18 29q-3 2-6 0L1 18q-2-3 0-6z" fill="#5cb985" />
        <path d="M15 5l10 10-10 10L5 15zM15 9l6 6-6 6-6-6z" stroke="#d5f0df" strokeWidth="1.200" />
        <path d="M12 14h6M12 17h6M15 5v6M15 19v6" stroke="#d5f0df" strokeWidth="1.200" />
      </Svg>
    ),
  },
  {
    name: "settings",
    active: true,
    icon: (
      <Svg w={30} h={30}>
        <path d="M11 0h8l1 5 3 2 5-1 2 6-4 3 4 4-3 6-5-1-3 2-1 4h-7l-1-4-4-2-5 1-3-6 4-4-4-4 3-6 5 1 3-2z" fill="#808892" />
        <circle cx="15" cy="15" r="7" fill="#e8eaed" />
        <circle cx="15" cy="15" r="5.300" fill="#0f58b0" />
      </Svg>
    ),
  },
  {
    name: "notion",
    active: true,
    icon: (
      <Svg w={25} h={28}>
        <path d="M1 3l17-2 6 4v20l-18 2-5-6z" fill="#1b1b1b" stroke="#eee" strokeWidth="1.800" strokeLinejoin="round" />
        <path d="M6 7l17-1.500v18L6 25z" fill="#f4f4f4" />
        <text x="14.500" y="21.500" fill="#111" fontSize="17" fontWeight="700" textAnchor="middle" fontFamily="Liberation Serif">
          N
        </text>
      </Svg>
    ),
  },
];

const Taskbar = () => (
  <div className="h-[60px] bg-[#1c1c1c] flex items-center pl-[211.5px] pr-[24px] text-white">
    {APPS.map((app) => (
      <div key={app.name} className="relative w-[55.1px] h-full flex items-center justify-center shrink-0 pb-[2px]">
        {app.icon}
        {app.badge && (
          <span className="absolute right-[7px] top-[9px] size-[20px] rounded-full bg-[#a9bcc0] text-[#222] text-[13px] leading-[20px] text-center">
            {app.badge}
          </span>
        )}
        {app.active && <i className="absolute bottom-[6px] w-[8px] h-[4px] rounded-full bg-[#9a9a9a]" />}
      </div>
    ))}
    <ChevronUp size={20} strokeWidth={2.3} className="ml-auto mb-[3px]" />
    <Svg w={20} h={18} className="ml-[19px] mt-px">
      <path d="M4 13a4 4 0 010-7 6 6 0 0111-1q3 1 3 5H8z" fill="#bcbcbc" />
      <circle cx="14" cy="12" r="6" fill="#4aa8e8" />
      <path d="M14 11v4.500M14 8v1.500" stroke="#123" strokeWidth="1.700" />
    </Svg>
    <Svg w={20} h={14} className="ml-[20px] mb-[3px]">
      <path d="M4 13a4 4 0 010-8 6 6 0 0111-1q5 1 5 5 0 4-4 4z" fill="#1376d0" />
      <path d="M2 12l9-6 8 5q-1 2-3 2H4z" fill="#35a8f0" />
    </Svg>
    <Wifi size={21} strokeWidth={2} className="ml-[19px] mb-[3px]" />
    <Volume2 size={21} strokeWidth={1.8} className="ml-[9px] mb-[3px]" />
    <Svg w={20} h={16} className="ml-[9px] mb-[3px]">
      <rect x="2" y="4" width="15" height="10.500" rx="2" stroke="#fff" strokeWidth="1.500" />
      <path d="M5 6.500h9.500V12H5z" fill="#fff" />
      <path d="M18.500 7.500v3.500" stroke="#fff" strokeWidth="2" />
      <path d="M4-1L0 5h3l-1 5 5-6H4z" fill="#fff" stroke="#1c1c1c" strokeWidth=".6" />
    </Svg>
    <div className="w-[83px] pb-[4px] text-right text-[15px] leading-[20px] tracking-[-0.25px] whitespace-nowrap">
      <div>12:18</div>
      <div>2/7/2025</div>
    </div>
  </div>
);

const App = () => (
  <div className="w-[1920px] h-[1080px] overflow-hidden bg-black font-['Open_Sans',sans-serif] select-none">
    <div className="h-[994px] border-x border-[#5a5a5a]">
      <TitleBar />
      <Toolbar />
      <VmTabs />
      <KaliPanel />
      <FirefoxTabs />
      <NavBar />
      <Bookmarks />
      <WebPage />
    </div>
    <StatusBar />
    <Taskbar />
  </div>
);

export default App;
